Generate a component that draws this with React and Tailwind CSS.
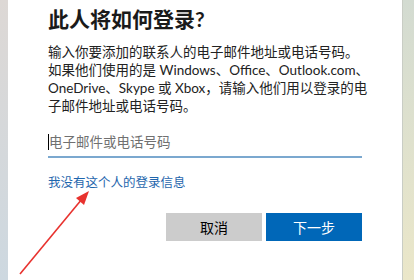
import React from 'react';

const font = { fontFamily: '"Lato", "Noto Sans CJK SC", sans-serif' };

const lines = [
  '输入你要添加的联系人的电子邮件地址或电话号码。',
  '如果他们使用的是 Windows、Office、Outlook.com、',
  'OneDrive、Skype 或 Xbox，请输入他们用以登录的电',
  '子邮件地址或电话号码。',
];

export default function App() {
  return (
    <div className="relative w-[414px] h-[280px] overflow-hidden flex" style={font}>
      <div className="w-[8px] h-full bg-gradient-to-b from-[#ddd8d5] to-[#cdd8e0]" />

      <div className="flex-1 h-full bg-white pl-[40px]">
        <div className="w-[314px] flex flex-col">
          <h1 className="pt-[5px] text-[21px] leading-[28px] font-bold text-[#1a1a1a]">此人将如何登录?</h1>

          <p className="mt-[10px] text-[13.5px] leading-[18px] text-[#222]">
            {lines.map((l) => (
              <span key={l} className="block whitespace-nowrap">{l}</span>
            ))}
          </p>

          <div className="mt-[13px] h-[30px] flex items-center border-b-2 border-[#7ba8cf]">
            <span className="w-px h-[16px] bg-black" />
            <span className="text-[13.5px] leading-[18px] text-[#707070]">电子邮件或电话号码</span>
          </div>

          <a className="mt-[16px] text-[12.5px] leading-[18px] text-[#1f66ad]">我没有这个人的登录信息</a>

          <div className="mt-[21px] flex justify-end gap-[4px]">
            <button className="w-[96px] h-[28px] bg-[#cccccc] text-[14px] text-black">取消</button>
            <button className="w-[96px] h-[28px] bg-[#0067b8] text-[14px] text-white">下一步</button>
          </div>
        </div>
      </div>

      <div className="w-[12px] h-full border-l border-[#c9cdc5] bg-gradient-to-b from-[#d3dbd1] to-[#ebe7c9]" />

      <svg className="absolute left-0 top-0 pointer-events-none" width="414" height="280">
        <line x1="20" y1="274" x2="82" y2="199" stroke="#e8322e" strokeWidth="1.6" />
        <polygon points="89,191 76,198 84,205" fill="#e8322e" />
      </svg>
    </div>
  );
}
